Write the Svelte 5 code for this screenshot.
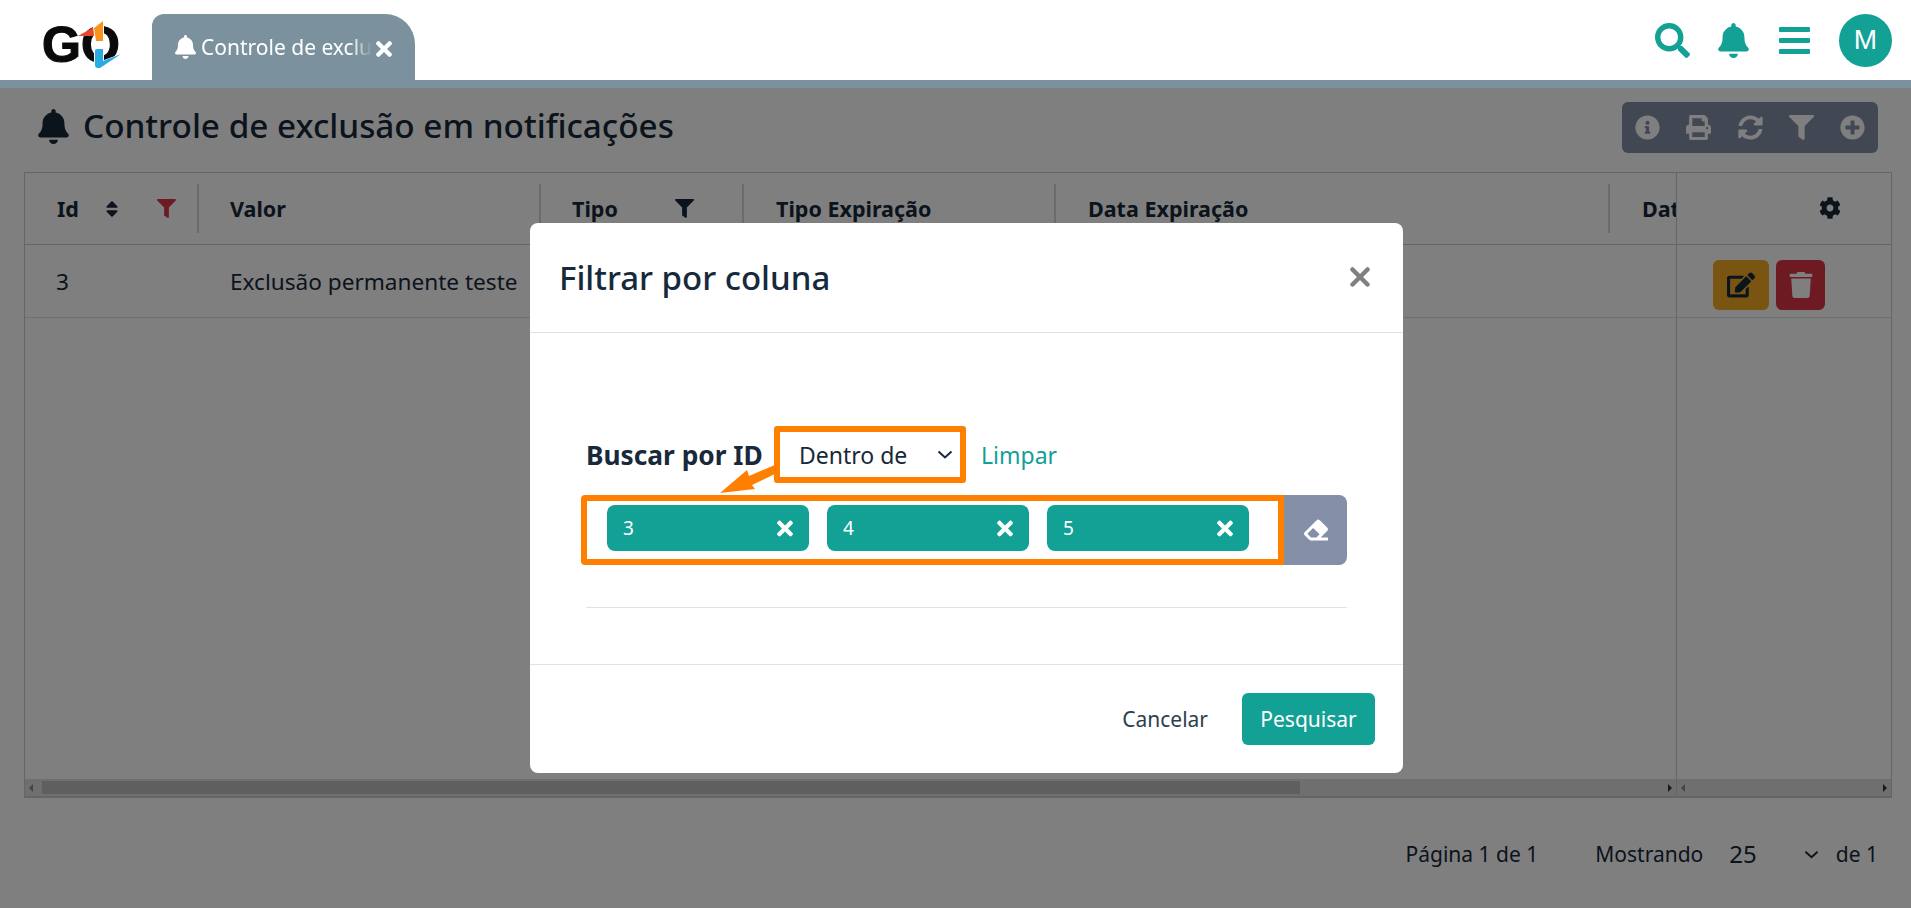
<script>
  const tools = ['info', 'print', 'sync', 'filter', 'plus']
  const chips = ['3', '4', '5']

  const icons = {
    bell: ['0 0 448 512', 'M224 512c35.32 0 63.97-28.65 63.97-64H160.03c0 35.35 28.65 64 63.97 64zm215.39-149.71c-19.32-20.76-55.47-51.99-55.47-154.29 0-77.7-54.48-139.9-127.94-155.16V32c0-17.67-14.32-32-31.98-32s-31.98 14.33-31.98 32v20.84C118.56 68.1 64.08 130.3 64.08 208c0 102.3-36.15 133.53-55.47 154.29-6 6.45-8.66 14.16-8.61 21.71.11 16.4 12.98 32 32.1 32h383.8c19.12 0 32-15.6 32.1-32 .05-7.55-2.61-15.27-8.61-21.71z'],
    search: ['0 0 512 512', 'M505 442.7L405.3 343c-4.5-4.5-10.6-7-17-7H372c27.6-35.3 44-79.7 44-128C416 93.1 322.9 0 208 0S0 93.1 0 208s93.1 208 208 208c48.3 0 92.7-16.4 128-44v16.3c0 6.4 2.5 12.5 7 17l99.7 99.7c9.4 9.4 24.6 9.4 33.9 0l28.3-28.3c9.4-9.4 9.4-24.6.1-34zM208 336c-70.7 0-128-57.2-128-128 0-70.7 57.2-128 128-128 70.7 0 128 57.2 128 128 0 70.7-57.2 128-128 128z'],
    times: ['0 0 352 512', 'M242.72 256l100.07-100.07c12.28-12.28 12.28-32.19 0-44.48l-22.24-22.24c-12.28-12.28-32.19-12.28-44.48 0L176 189.28 75.93 89.21c-12.28-12.28-32.19-12.28-44.48 0L9.21 111.45c-12.28 12.28-12.28 32.19 0 44.48L109.28 256 9.21 356.07c-12.28 12.28-12.28 32.19 0 44.48l22.24 22.24c12.28 12.28 32.2 12.28 44.48 0L176 322.72l100.07 100.07c12.28 12.28 32.2 12.28 44.48 0l22.24-22.24c12.28-12.28 12.28-32.19 0-44.48L242.72 256z'],
    filter: ['0 0 512 512', 'M487.976 0H24.028C2.71 0-8.047 25.866 7.058 40.971L192 225.941V432c0 7.831 3.821 15.17 10.237 19.662l80 55.98C298.02 518.69 320 507.493 320 487.98V225.941l184.947-184.97C520.021 25.896 509.338 0 487.976 0z'],
    info: ['0 0 512 512', 'M256 8C119.043 8 8 119.083 8 256c0 136.997 111.043 248 248 248s248-111.003 248-248C504 119.083 392.957 8 256 8zm0 110c23.196 0 42 18.804 42 42s-18.804 42-42 42-42-18.804-42-42 18.804-42 42-42zm56 254c0 6.627-5.373 12-12 12h-88c-6.627 0-12-5.373-12-12v-24c0-6.627 5.373-12 12-12h12v-64h-12c-6.627 0-12-5.373-12-12v-24c0-6.627 5.373-12 12-12h64c6.627 0 12 5.373 12 12v100h12c6.627 0 12 5.373 12 12v24z'],
    print: ['0 0 512 512', 'M448 192V77.25c0-8.49-3.37-16.62-9.37-22.63L393.37 9.37c-6-6-14.14-9.37-22.63-9.37H96C78.33 0 64 14.33 64 32v160c-35.35 0-64 28.65-64 64v112c0 8.84 7.16 16 16 16h48v96c0 17.67 14.33 32 32 32h320c17.67 0 32-14.33 32-32v-96h48c8.84 0 16-7.16 16-16V256c0-35.35-28.65-64-64-64zm-64 256H128v-96h256v96zm0-224H128V64h192v48c0 8.84 7.16 16 16 16h48v96zm48 72c-13.25 0-24-10.75-24-24 0-13.26 10.75-24 24-24s24 10.74 24 24c0 13.25-10.75 24-24 24z'],
    sync: ['0 0 512 512', 'M370.72 133.28C339.458 104.008 298.888 87.962 255.848 88c-77.458.068-144.328 53.178-162.791 126.85-1.344 5.363-6.122 9.15-11.651 9.15H24.103c-7.498 0-13.194-6.807-11.807-14.176C33.933 94.924 134.813 8 256 8c66.448 0 126.791 26.136 171.315 68.685L463.03 40.97C478.149 25.851 504 36.559 504 57.941V192c0 13.255-10.745 24-24 24H345.941c-21.382 0-32.09-25.851-16.971-40.971l41.75-41.749zM32 296h134.059c21.382 0 32.09 25.851 16.971 40.971l-41.75 41.75c31.262 29.273 71.835 45.319 114.876 45.28 77.418-.07 144.315-53.144 162.787-126.849 1.344-5.363 6.122-9.15 11.651-9.15h57.304c7.498 0 13.194 6.807 11.807 14.176C478.067 417.076 377.187 504 256 504c-66.448 0-126.791-26.136-171.315-68.685L48.97 471.03C33.851 486.149 8 475.441 8 454.059V320c0-13.255 10.745-24 24-24z'],
    plus: ['0 0 512 512', 'M256 8C119 8 8 119 8 256s111 248 248 248 248-111 248-248S393 8 256 8zm144 276c0 6.6-5.4 12-12 12h-92v92c0 6.6-5.4 12-12 12h-56c-6.6 0-12-5.4-12-12v-92h-92c-6.6 0-12-5.4-12-12v-56c0-6.6 5.4-12 12-12h92v-92c0-6.6 5.4-12 12-12h56c6.6 0 12 5.4 12 12v92h92c6.6 0 12 5.4 12 12v56z'],
    cog: ['0 0 512 512', 'M487.4 315.7l-42.6-24.6c4.3-23.2 4.3-47 0-70.2l42.6-24.6c4.9-2.8 7.1-8.6 5.5-14-11.1-35.6-30-67.8-54.7-94.6-3.8-4.1-10-5.1-14.8-2.3L380.8 110c-17.9-15.4-38.5-27.3-60.8-35.1V25.8c0-5.6-3.9-10.5-9.4-11.7-36.7-8.2-74.3-7.8-109.2 0-5.5 1.2-9.4 6.1-9.4 11.7V75c-22.2 7.9-42.8 19.8-60.8 35.1L88.7 85.5c-4.9-2.8-11-1.9-14.8 2.3-24.7 26.7-43.6 58.9-54.7 94.6-1.7 5.4.6 11.2 5.5 14L67.3 221c-4.3 23.2-4.3 47 0 70.2l-42.6 24.6c-4.9 2.8-7.1 8.6-5.5 14 11.1 35.6 30 67.8 54.7 94.6 3.8 4.1 10 5.1 14.8 2.3l42.6-24.6c17.9 15.4 38.5 27.3 60.8 35.1v49.2c0 5.6 3.9 10.5 9.4 11.7 36.7 8.2 74.3 7.8 109.2 0 5.5-1.2 9.4-6.1 9.4-11.7v-49.2c22.2-7.9 42.8-19.8 60.8-35.1l42.6 24.6c4.9 2.8 11 1.9 14.8-2.3 24.7-26.7 43.6-58.9 54.7-94.6 1.5-5.5-.7-11.3-5.6-14.1zM256 336c-44.1 0-80-35.9-80-80s35.9-80 80-80 80 35.9 80 80-35.9 80-80 80z'],
    edit: ['0 0 576 512', 'M402.6 83.2l90.2 90.2c3.8 3.8 3.8 10 0 13.8L274.4 405.6l-92.8 10.3c-12.4 1.4-22.9-9.1-21.5-21.5l10.3-92.8L388.8 83.2c3.8-3.8 10-3.8 13.8 0zm162-22.9l-48.8-48.8c-15.2-15.2-39.9-15.2-55.2 0l-35.4 35.4c-3.8 3.8-3.8 10 0 13.8l90.2 90.2c3.8 3.8 10 3.8 13.8 0l35.4-35.4c15.2-15.3 15.2-40 0-55.2zM384 346.2V448H64V128h229.8c3.2 0 6.2-1.3 8.5-3.5l40-40c7.6-7.6 2.2-20.5-8.5-20.5H48C21.5 64 0 85.5 0 112v352c0 26.5 21.5 48 48 48h352c26.5 0 48-21.5 48-48V306.2c0-10.7-12.9-16-20.5-8.5l-40 40c-2.2 2.3-3.5 5.3-3.5 8.5z'],
    trash: ['0 0 448 512', 'M432 32H312l-9.4-18.7A24 24 0 0 0 281.1 0H166.8a23.72 23.72 0 0 0-21.4 13.3L136 32H16A16 16 0 0 0 0 48v32a16 16 0 0 0 16 16h416a16 16 0 0 0 16-16V48a16 16 0 0 0-16-16zM53.2 467a48 48 0 0 0 47.9 45h245.8a48 48 0 0 0 47.9-45L416 128H32z'],
    eraser: ['0 0 512 512', 'M497.941 273.941c18.745-18.745 18.745-49.137 0-67.882l-160-160c-18.745-18.745-49.136-18.746-67.883 0l-256 256c-18.745 18.745-18.745 49.137 0 67.882l96 96A48.004 48.004 0 0 0 144 480h356c6.627 0 12-5.373 12-12v-40c0-6.627-5.373-12-12-12H355.883l142.058-142.059zm-302.627-62.627l137.373 137.373L265.373 416H150.628l-80-80 124.686-124.686z'],
    sort: ['0 0 320 512', 'M41 288h238c21.4 0 32.1 25.9 17 41L177 448c-9.4 9.4-24.6 9.4-33.9 0L24 329c-15.1-15.1-4.4-41 17-41zm255-105L177 64c-9.4-9.4-24.6-9.4-33.9 0L24 183c-15.1 15.1-4.4 41 17 41h238c21.4 0 32.1-25.9 17-41z']
  }
</script>

{#snippet icon(name, cls)}
  <svg class={cls} viewBox={icons[name][0]} fill="currentColor"><path d={icons[name][1]} /></svg>
{/snippet}

{#snippet chevron(cls)}
  <svg class={cls} viewBox="0 0 16 9" fill="none" stroke="currentColor" stroke-width="2"><path d="M1.5 1.5 8 7.500l6.500-6" /></svg>
{/snippet}

<div class="app">
  <header class="topbar">
    <div class="logo">
      <span class="logo-text">GO</span>
      <svg class="logo-arrows" viewBox="0 0 99 66">
        <path d="M36 22 52 13 52 22Z" fill="#e8472b" />
        <path d="M51 13 60 6 H62 V28 H53Z" fill="#fff" />
        <path d="M52 14 61 7 V27 H54Z" fill="#f7941d" />
        <path d="M52 34 H62 V46 L81 39 58 55 H52Z" fill="#fff" />
        <path d="M55 35 H61 V47 L79 40 58 54 H56 Q53 54 53 51 V37 Q53 35 55 35Z" fill="#29abe2" />
      </svg>
    </div>

    <div class="tab">
      {@render icon('bell', 'tab-bell')}
      <span class="tab-label">Controle de exclusão em notificações</span>
      {@render icon('times', 'tab-close')}
    </div>

    <div class="top-actions">
      {@render icon('search', 'top-search')}
      {@render icon('bell', 'top-bell')}
      <div class="bars"><i></i><i></i><i></i></div>
      <div class="avatar">M</div>
    </div>
  </header>
  <div class="strip"></div>

  <main class="page">
    <div class="title-row">
      {@render icon('bell', 'title-bell')}
      <h1>Controle de exclusão em notificações</h1>
      <div class="toolbar">
        {#each tools as t}
          {@render icon(t, 'tool')}
        {/each}
      </div>
    </div>

    <section class="table">
      <div class="table-main">
        <div class="thead">
          <div class="th c-id">
            <b>Id</b>
            {@render icon('sort', 'sort')}
            {@render icon('filter', 'filter-red')}
          </div>
          <div class="th c-valor"><b>Valor</b></div>
          <div class="th c-tipo">
            <b>Tipo</b>
            {@render icon('filter', 'filter-dark')}
          </div>
          <div class="th c-texp"><b>Tipo Expiração</b></div>
          <div class="th c-dexp"><b>Data Expiração</b></div>
          <div class="th c-dat"><b>Data</b></div>
        </div>
        <div class="tr">
          <div class="td c-id">3</div>
          <div class="td c-valor">Exclusão permanente teste</div>
        </div>
        <div class="hscroll main-scroll">
          <span class="arrow-l"></span>
          <span class="thumb"></span>
          <span class="arrow-r"></span>
        </div>
      </div>

      <div class="table-side">
        <div class="side-head">
          {@render icon('cog', 'cog')}
        </div>
        <div class="side-row">
          <button class="act act-edit">{@render icon('edit', 'act-icon')}</button>
          <button class="act act-del">{@render icon('trash', 'act-icon')}</button>
        </div>
        <div class="hscroll">
          <span class="arrow-l"></span>
          <span class="arrow-r"></span>
        </div>
      </div>
    </section>

    <div class="pager">
      <span>Página 1 de 1</span>
      <span class="pager-show">Mostrando</span>
      <span class="pager-size">25</span>
      {@render chevron('pager-chevron')}
      <span>de 1</span>
    </div>
  </main>

  <div class="backdrop">
    <div class="modal">
      <div class="modal-head">
        <h2>Filtrar por coluna</h2>
        <svg class="modal-close" viewBox="0 0 20 20" fill="none" stroke="currentColor" stroke-width="4.500" stroke-linecap="round"><path d="M2.500 2.500 17.500 17.500M17.500 2.500 2.500 17.500" /></svg>
      </div>
      <div class="modal-body">
        <div class="filter-row">
          <strong>Buscar por ID</strong>
          <div class="select">
            <span>Dentro de</span>
            {@render chevron('select-chevron')}
          </div>
          <span class="limpar">Limpar</span>
          <svg class="callout" viewBox="0 0 60 32"><path d="M1 29 28 6 30 12 58 0V9L33 21 36 25Z" fill="#ff8000" /></svg>
        </div>
        <div class="chips-row">
          <div class="chips">
            {#each chips as c}
              <div class="chip">
                <span>{c}</span>
                {@render icon('times', 'chip-x')}
              </div>
            {/each}
          </div>
          <button class="eraser">{@render icon('eraser', 'eraser-icon')}</button>
        </div>
      </div>
      <div class="modal-foot">
        <span class="cancel">Cancelar</span>
        <button class="search-btn">Pesquisar</button>
      </div>
    </div>
  </div>
</div>

<style>
  :global(body) {
    margin: 0;
    background: #fff;
    overflow: hidden;
  }
  .app {
    position: relative;
    height: 908px;
    overflow: hidden;
    font-family: 'Noto Sans', 'Open Sans', sans-serif;
    color: #17293a;
  }
  button {
    border: 0;
    padding: 0;
    font-family: inherit;
  }

  /* top bar */
  .topbar {
    height: 80px;
    display: flex;
    align-items: flex-end;
    padding-left: 42px;
    box-sizing: border-box;
  }
  .logo {
    position: relative;
    width: 110px;
    height: 66px;
    flex: none;
  }
  .logo-text {
    position: absolute;
    left: 0;
    top: 1px;
    font: 700 50px/60px 'Liberation Sans', sans-serif;
    color: #0a0a0a;
    -webkit-text-stroke: 1.2px #0a0a0a;
  }
  .logo-arrows {
    position: absolute;
    left: 0;
    top: 0;
    width: 99px;
    height: 66px;
  }
  .tab {
    width: 263px;
    height: 66px;
    background: #7b929e;
    border-radius: 12px 30px 0 0;
    color: #fff;
    display: flex;
    align-items: center;
    padding: 0 23px 0 23px;
    box-sizing: border-box;
    position: relative;
  }
  .tab-bell {
    width: 21px;
    height: 24px;
    flex: none;
    margin-right: 5px;
  }
  .tab-label {
    flex: 1;
    overflow: hidden;
    white-space: nowrap;
    font-size: 21px;
    -webkit-mask-image: linear-gradient(to right, #000 88%, transparent 100%);
    mask-image: linear-gradient(to right, #000 88%, transparent 100%);
  }
  .tab-close {
    width: 16px;
    height: 24px;
    flex: none;
    margin-left: 4px;
    margin-top: 4px;
  }
  .top-actions {
    margin-left: auto;
    align-self: stretch;
    display: flex;
    align-items: center;
    padding-right: 19px;
  }
  .top-actions :global(svg) {
    color: #13a095;
  }
  .top-actions :global(.top-search) {
    width: 35px;
    height: 35px;
    margin-right: 28px;
  }
  .top-actions :global(.top-bell) {
    width: 31px;
    height: 35px;
    margin-right: 30px;
  }
  .bars {
    width: 31px;
    height: 27px;
    display: flex;
    flex-direction: column;
    justify-content: space-between;
    margin-right: 29px;
  }
  .bars i {
    display: block;
    height: 5px;
    background: #13a095;
    border-radius: 1px;
  }
  .avatar {
    width: 53px;
    height: 53px;
    border-radius: 50%;
    background: #13a095;
    color: #fff;
    display: flex;
    align-items: center;
    justify-content: center;
    font: 400 28px 'Liberation Sans', sans-serif;
  }
  .strip {
    height: 8px;
    background: #7b929e;
  }

  /* page under the modal */
  .page {
    padding: 14px 19px 0 24px;
  }
  .title-row {
    height: 51px;
    display: flex;
    align-items: center;
    padding-left: 14px;
    padding-right: 14px;
  }
  .title-row :global(.title-bell) {
    width: 31px;
    height: 35px;
    margin-right: 14px;
    flex: none;
    margin-top: -2px;
  }
  h1 {
    margin: 0;
    font-size: 33.3px;
    font-weight: 500;
    line-height: 40px;
    margin-top: -6px;
  }
  .toolbar {
    margin-left: auto;
    width: 256px;
    height: 51px;
    box-sizing: border-box;
    background: #8390a8;
    border-radius: 6px;
    display: flex;
    align-items: center;
    justify-content: space-between;
    padding: 0 13px;
    color: #fff;
  }
  .toolbar :global(.tool) {
    width: 25px;
    height: 25px;
  }

  .table {
    margin-top: 19px;
    height: 626px;
    border: 1px solid #c6cad4;
    border-bottom-width: 2px;
    box-sizing: border-box;
    display: flex;
    background: #fff;
  }
  .table-main {
    flex: 1;
    min-width: 0;
    overflow: hidden;
    display: flex;
    flex-direction: column;
  }
  .thead {
    height: 71px;
    flex: none;
    display: flex;
    align-items: center;
    border-bottom: 1px solid #c6cad4;
    font-size: 21.500px;
  }
  .th {
    height: 49px;
    display: flex;
    align-items: center;
    padding-left: 32px;
    box-sizing: border-box;
    border-right: 2px solid #d4d7de;
    flex: none;
  }
  .th.c-valor,
  .th.c-tipo {
    padding-left: 31px;
  }
  .th b {
    font-weight: 700;
  }
  .c-id { width: 174px; }
  .c-valor { width: 342px; }
  .c-tipo { width: 203px; }
  .c-texp { width: 312px; }
  .c-dexp { width: 554px; }
  .c-dat { width: 240px; border-right: 0; }
  .th :global(.sort) {
    width: 16px;
    height: 20px;
    margin-left: 25px;
  }
  .th :global(.filter-red) {
    width: 19px;
    height: 19px;
    margin-left: auto;
    margin-right: 21px;
    color: #dc3545;
  }
  .th :global(.filter-dark) {
    width: 19px;
    height: 19px;
    margin-left: auto;
    margin-right: 48px;
  }
  .tr {
    height: 72px;
    flex: none;
    display: flex;
    align-items: center;
    border-bottom: 1px solid #dcdfe5;
    font-size: 22.600px;
  }
  .td {
    padding-left: 31px;
    box-sizing: border-box;
    flex: none;
    white-space: nowrap;
  }
  .hscroll {
    margin-top: auto;
    height: 17px;
    flex: none;
    background: #dedede;
    position: relative;
  }
  .thumb {
    position: absolute;
    left: 17px;
    width: 1258px;
    top: 2px;
    bottom: 2px;
    background: #bfbfbf;
  }
  .arrow-l,
  .arrow-r {
    position: absolute;
    top: 5px;
    width: 0;
    height: 0;
    border-top: 4px solid transparent;
    border-bottom: 4px solid transparent;
  }
  .arrow-l {
    left: 4px;
    border-right: 4px solid #8a8a8a;
  }
  .arrow-r {
    right: 4px;
    border-left: 4px solid #333;
  }
  .table-side {
    width: 214px;
    flex: none;
    border-left: 1px solid #c6cad4;
    display: flex;
    flex-direction: column;
  }
  .side-head {
    height: 71px;
    flex: none;
    border-bottom: 1px solid #c6cad4;
    display: flex;
    align-items: center;
    justify-content: flex-end;
    padding-right: 50px;
  }
  .side-head :global(.cog) {
    width: 22px;
    height: 24px;
    margin-top: -1px;
  }
  .side-row {
    height: 73px;
    flex: none;
    box-sizing: border-box;
    border-bottom: 1px solid #dcdfe5;
    display: flex;
    align-items: center;
    justify-content: flex-end;
    gap: 7px;
    padding: 7px 66px 0 0;
  }
  .act {
    height: 50px;
    border-radius: 6px;
    display: flex;
    align-items: center;
    justify-content: center;
  }
  .act-edit {
    width: 56px;
    background: #f4aa22;
    color: #17293a;
  }
  .act-del {
    width: 49px;
    background: #dc3545;
    color: #fff;
  }
  .act :global(.act-icon) {
    width: 28px;
    height: 26px;
  }

  .pager {
    height: 30px;
    margin-top: 41px;
    display: flex;
    align-items: center;
    justify-content: flex-end;
    font-size: 21px;
    padding-right: 14px;
  }
  .pager-show {
    margin-left: 57px;
  }
  .pager-size {
    margin-left: 26px;
    font-size: 24px;
    margin-top: -2px;
  }
  .pager :global(.pager-chevron) {
    width: 15px;
    height: 9px;
    margin-left: 47px;
    margin-right: 17px;
  }

  /* modal */
  .backdrop {
    position: absolute;
    inset: 88px 0 0 0;
    background: rgba(0, 0, 0, 0.5);
    padding: 135px 0 0 530px;
    box-sizing: border-box;
  }
  .modal {
    width: 873px;
    height: 550px;
    background: #fff;
    border-radius: 8px;
    display: flex;
    flex-direction: column;
  }
  .modal-head {
    height: 110px;
    flex: none;
    box-sizing: border-box;
    border-bottom: 1px solid #dee2e6;
    display: flex;
    align-items: center;
    padding: 0 33px 0 29px;
  }
  h2 {
    margin: 0;
    font-size: 33px;
    font-weight: 500;
  }
  .modal-head :global(.modal-close) {
    margin-left: auto;
    width: 20px;
    height: 20px;
    color: #808080;
    margin-top: -1px;
  }
  .modal-body {
    flex: 1;
    box-sizing: border-box;
    padding: 93px 56px 0 51px;
    background-image: linear-gradient(#dee2e6, #dee2e6);
    background-repeat: no-repeat;
    background-size: 761px 1px;
    background-position: 56px 274px;
  }
  .filter-row {
    position: relative;
    display: flex;
    align-items: center;
    height: 57px;
    margin-left: 5px;
    font-size: 23px;
  }
  .filter-row strong {
    font-size: 26.300px;
    font-weight: 700;
    white-space: nowrap;
    width: 188px;
    flex: none;
  }
  .select {
    width: 192px;
    height: 57px;
    flex: none;
    box-sizing: border-box;
    border: 6px solid #ff8000;
    border-radius: 3px;
    display: flex;
    align-items: center;
    padding: 0 7px 0 19px;
  }
  .select span {
    flex: 1;
  }
  .select :global(.select-chevron) {
    width: 16px;
    height: 9px;
  }
  .limpar {
    margin-left: 15px;
    color: #13a095;
  }
  .callout {
    position: absolute;
    left: 133px;
    top: 38px;
    width: 60px;
    height: 32px;
  }
  .chips-row {
    margin-top: 12px;
    display: flex;
    height: 70px;
  }
  .chips {
    width: 703px;
    box-sizing: border-box;
    border: 6px solid #ff8000;
    border-radius: 4px 0 0 4px;
    display: flex;
    align-items: flex-start;
    gap: 18px;
    padding: 4px 0 0 20px;
  }
  .chip {
    width: 202px;
    height: 46px;
    box-sizing: border-box;
    background: #13a095;
    border-radius: 8px;
    color: #fff;
    display: flex;
    align-items: center;
    justify-content: space-between;
    padding: 0 16px;
    font-size: 19px;
  }
  .chip :global(.chip-x) {
    width: 16px;
    height: 23px;
  }
  .eraser {
    width: 63px;
    background: #8390a8;
    border-radius: 0 8px 8px 0;
    color: #fff;
    display: flex;
    align-items: center;
    justify-content: center;
  }
  .eraser :global(.eraser-icon) {
    width: 24px;
    height: 24px;
  }
  .modal-foot {
    height: 109px;
    flex: none;
    box-sizing: border-box;
    border-top: 1px solid #dee2e6;
    display: flex;
    align-items: center;
    justify-content: flex-end;
    padding: 0 28px 0 0;
    gap: 34px;
    font-size: 21px;
  }
  .search-btn {
    width: 133px;
    height: 52px;
    background: #13a095;
    color: #fff;
    border-radius: 6px;
    font-size: 21px;
  }
  .cancel {
    color: #2f3e4c;
  }
</style>
